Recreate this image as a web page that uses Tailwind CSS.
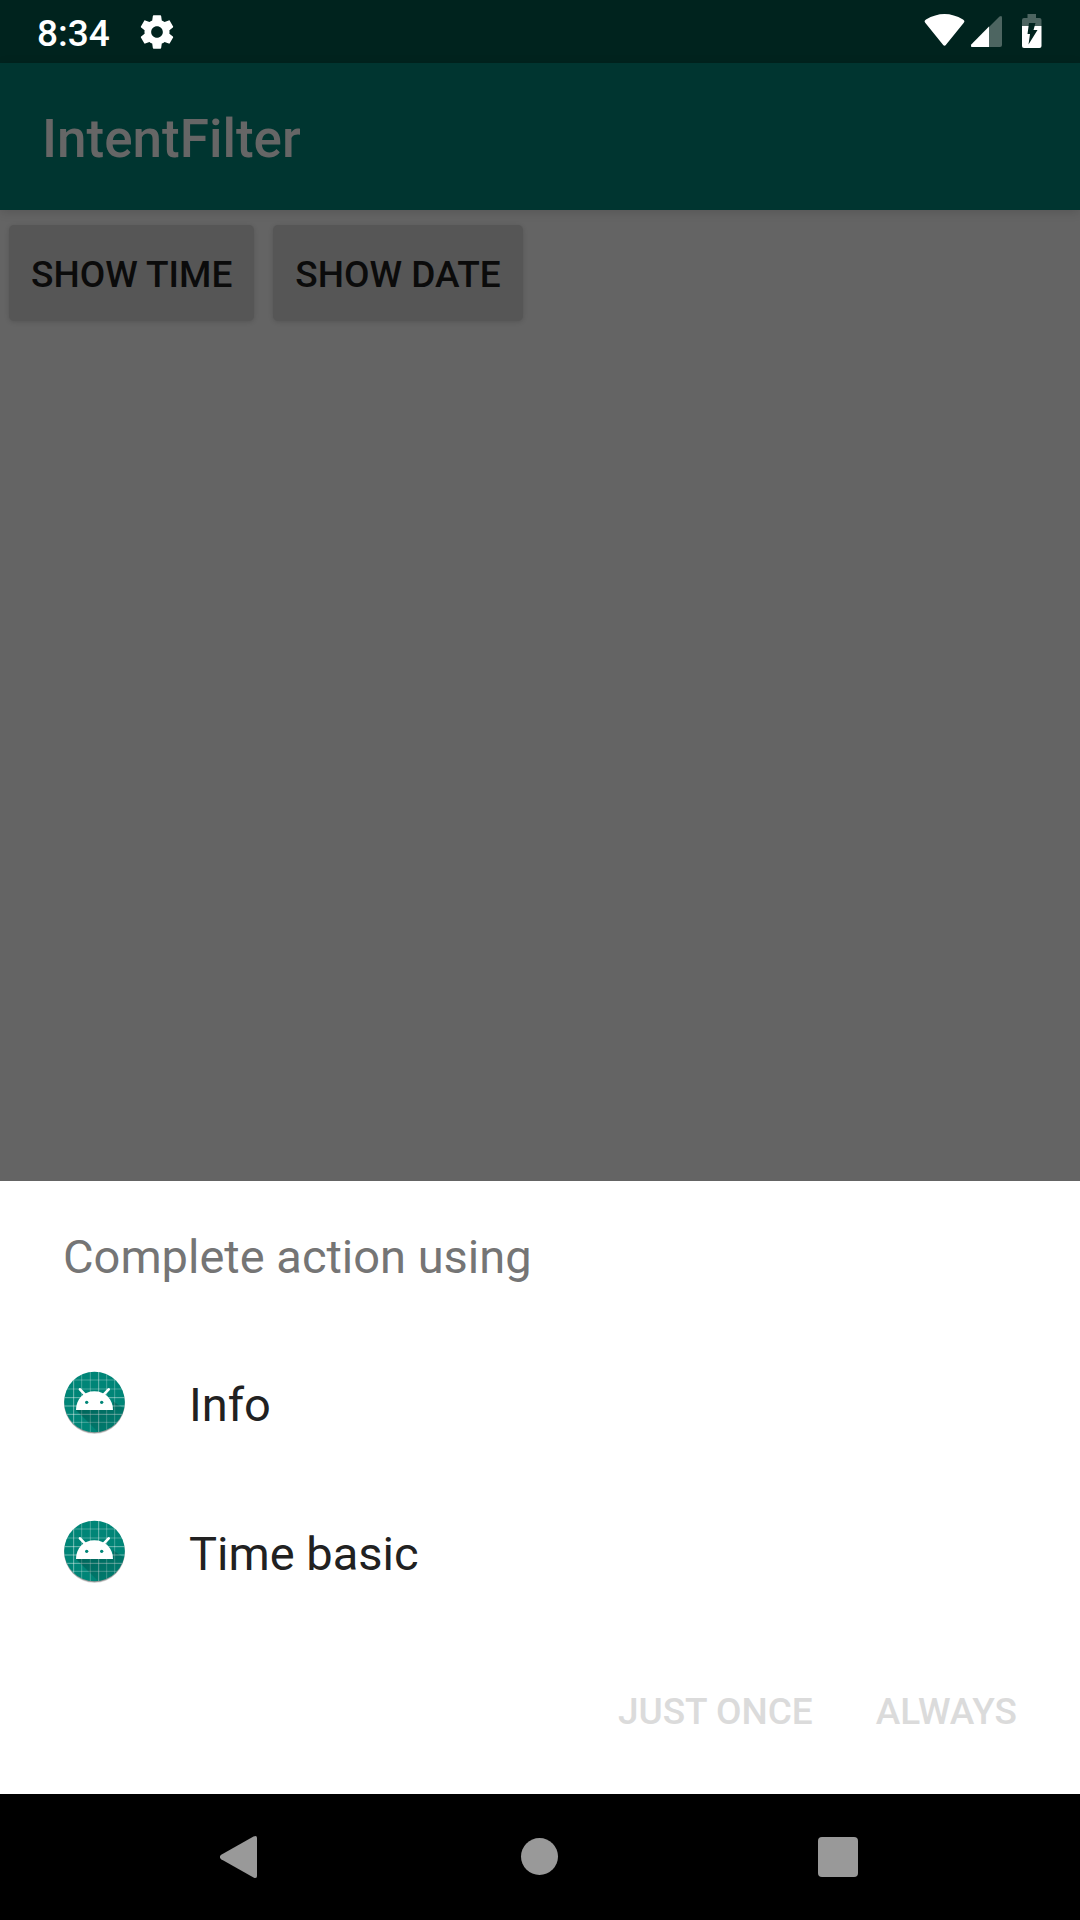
<!DOCTYPE html>
<html lang="en">
<head>
<meta charset="utf-8">
<meta name="viewport" content="width=device-width, initial-scale=1">
<title>IntentFilter</title>
<script src="https://cdn.jsdelivr.net/npm/@tailwindcss/browser@4"></script>
</head>
<body class="min-h-screen flex flex-col bg-[#646464] font-['Roboto',sans-serif]">

<svg class="absolute size-0" aria-hidden="true">
  <defs>
    <linearGradient id="shade" x1="0" y1="0" x2="1" y2="1">
      <stop offset="0" stop-color="#000" stop-opacity=".28"/>
      <stop offset="1" stop-color="#000" stop-opacity=".02"/>
    </linearGradient>
    <clipPath id="disc"><circle cx="133.500" cy="126" r="91"/></clipPath>
    <symbol id="android" viewBox="39 30 189 195">
      <circle cx="133.500" cy="131" r="91" fill="#000" fill-opacity=".12"/>
      <circle cx="133.500" cy="129" r="91" fill="#000" fill-opacity=".3"/>
      <g clip-path="url(#disc)">
        <rect x="39" y="30" width="189" height="189" fill="#008577"/>
        <g stroke="#fff" stroke-width="3">
          <path stroke-opacity=".45" d="M71 30V220M146 30V220M39 138H228M39 163H228M39 113H228"/>
          <path stroke-opacity=".28" d="M95 30V220M121 30V220M170 30V220M194 30V220M39 60H228M39 87H228M39 187H228"/>
        </g>
        <path fill="url(#shade)" d="M78 150L148 220H228V150L189 124V150z"/>
      </g>
      <path fill="#fff" d="M78 150C78 118 101 94 133 94S189 118 189 150z"/>
      <path stroke="#fff" stroke-width="8" stroke-linecap="round" d="M90 88L105 104M176 88L161 104"/>
      <circle cx="110" cy="127" r="5" fill="#008577"/>
      <circle cx="155" cy="127" r="5" fill="#008577"/>
    </symbol>
  </defs>
</svg>

<header>
  <div class="h-[63px] flex items-center justify-between bg-[#00231e] pl-[37px] pr-[38px] text-white">
    <div class="flex items-center gap-[27px]">
      <time class="pt-1 text-[37px] leading-[44px] font-medium">8:34</time>
      <svg class="size-10" viewBox="0 0 24 24" fill="currentColor" role="img" aria-label="Settings"><path d="M19.430 12.980c.04-.32.07-.64.07-.98s-.03-.66-.07-.98l2.110-1.650c.19-.15.24-.42.12-.64l-2-3.460c-.12-.22-.39-.3-.61-.22l-2.490 1c-.52-.4-1.080-.73-1.690-.98l-.38-2.650C14.460 2.180 14.250 2 14 2h-4c-.25 0-.46.18-.49.42l-.38 2.650c-.61.25-1.170.59-1.690.98l-2.490-1c-.23-.09-.49 0-.61.22l-2 3.460c-.13.22-.07.49.12.64l2.110 1.650c-.04.32-.07.65-.07.98s.03.66.07.98l-2.110 1.650c-.19.15-.24.42-.12.64l2 3.460c.12.22.39.3.61.22l2.490-1c.52.4 1.080.73 1.690.98l.38 2.650c.03.24.24.42.49.42h4c.25 0 .46-.18.49-.42l.38-2.650c.61-.25 1.170-.59 1.690-.98l2.490 1c.23.09.49 0 .61-.22l2-3.460c.12-.22.07-.49-.12-.64l-2.110-1.650zM12 15.500c-1.930 0-3.500-1.570-3.500-3.500s1.570-3.500 3.500-3.500 3.500 1.570 3.500 3.500-1.570 3.500-3.500 3.500z"/></svg>
    </div>
    <svg class="h-[63px] w-[118px]" viewBox="0 0 118 63" role="img" aria-label="Wi-Fi, signal and charging battery">
      <path fill="#fff" d="M1.400 23Q-.5 21 2 19.500Q20.500 8.500 39 19.500Q41.500 21 39.600 23L22 44.800Q20.500 46.500 19 44.800z"/>
      <path fill="#4d6561" d="M65 27L75.500 16.600Q78 15 78 17.500V45Q78 47 76 47H65z"/>
      <path fill="#fff" d="M65 26.500V47H48.500Q46 47 47.500 44.200z"/>
      <path fill="#4d6561" d="M103.500 14H112V18H115.500Q117.500 18 117.500 20V26H98V20Q98 18 100 18H103.500z"/>
      <path fill="#fff" d="M98 26H117.500V46Q117.500 48 115.500 48H100Q98 48 98 46z"/>
      <path fill="#00231e" d="M105 23H111.500L109.500 30H113.500L104.500 44.500L106 34H103.500z"/>
    </svg>
  </div>
  <div class="relative h-[147px] flex items-center bg-[#003530] px-[42px] shadow-[0_2px_10px_rgba(0,0,0,0.14)]">
    <h1 class="pt-1 text-[53px] leading-[62px] font-medium text-[#666666]">IntentFilter</h1>
  </div>
</header>

<main class="flex-1 flex items-start gap-[19px] px-[9px] pt-[15px]">
  <button type="button" class="h-24 rounded-[5px] bg-[#565656] px-[22px] pt-1 text-[37px] leading-[44px] font-medium text-[#0b0b0b] shadow-[0_1px_5px_rgba(0,0,0,0.15)]">SHOW TIME</button>
  <button type="button" class="h-24 rounded-[5px] bg-[#565656] px-[22px] pt-1 text-[37px] leading-[44px] font-medium text-[#0b0b0b] shadow-[0_1px_5px_rgba(0,0,0,0.15)]">SHOW DATE</button>
</main>

<section aria-labelledby="sheet-title" class="bg-white text-[47px] leading-[56px] text-[#212121]">
  <h2 id="sheet-title" class="px-[63px] pt-12 pb-[43px] text-[#757575]">Complete action using</h2>
  <ul>
    <li><button type="button" class="flex h-[149px] w-full items-center gap-[63px] px-[63px] text-left"><svg class="h-[65px] w-[63px]" aria-hidden="true"><use href="#android"/></svg><span class="pt-1">Info</span></button></li>
    <li><button type="button" class="flex h-[149px] w-full items-center gap-[63px] px-[63px] text-left"><svg class="h-[65px] w-[63px]" aria-hidden="true"><use href="#android"/></svg><span class="pt-1">Time basic</span></button></li>
  </ul>
  <div class="flex h-[168px] items-center justify-end gap-[63px] px-[63px] pt-1 text-[37px] leading-[44px] font-medium text-[#dbdbdb]">
    <button type="button" disabled>JUST ONCE</button>
    <button type="button" disabled>ALWAYS</button>
  </div>
</section>

<nav class="flex h-[126px] justify-center bg-black text-[#999999]" aria-label="System">
  <button type="button" aria-label="Back" class="flex w-[299px] items-center justify-center"><svg class="size-[42px]" viewBox="3 0 42 42" fill="currentColor"><path d="M36.500.6Q40 -1 40 2V40Q40 43 36.500 41.400L4.200 23.200Q1.500 21 4.200 18.800z"/></svg></button>
  <button type="button" aria-label="Home" class="flex w-[299px] items-center justify-center"><svg class="size-[42px]" viewBox="0 0 42 42" fill="currentColor"><circle cx="20.500" cy="20.500" r="18.500"/></svg></button>
  <button type="button" aria-label="Recent apps" class="flex w-[299px] items-center justify-center"><svg class="size-[42px]" viewBox="0 0 42 42" fill="currentColor"><rect x="0" y="1" width="40" height="40" rx="4"/></svg></button>
</nav>
</body>
</html>
